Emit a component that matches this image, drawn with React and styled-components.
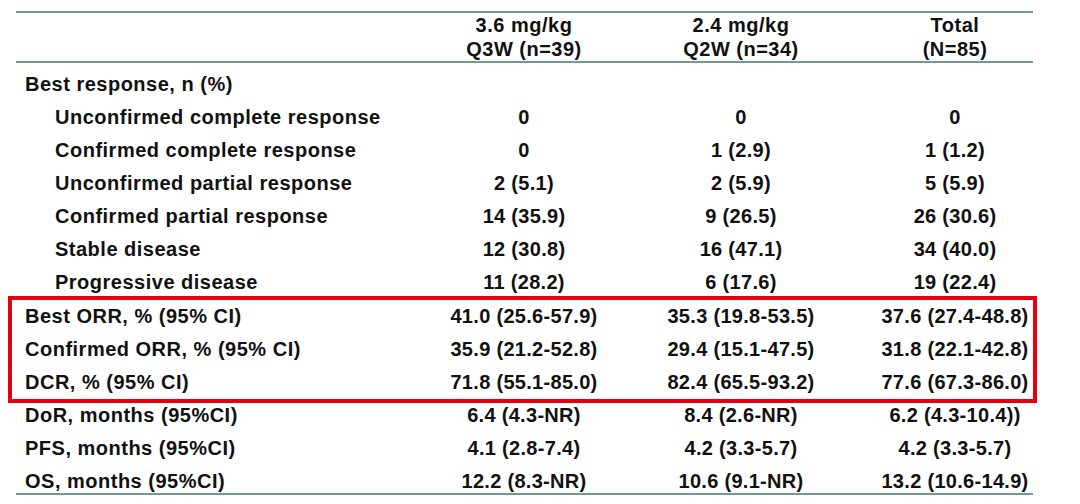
import React from "react";
import styled, { createGlobalStyle } from "styled-components";

const Global = createGlobalStyle`
  html, body { margin: 0; padding: 0; background: #ffffff; }
  body { font-family: "Liberation Sans", Arial, sans-serif; color: #111111; }
`;

const Page = styled.div`
  width: 1080px;
  height: 504px;
  overflow: hidden;
  padding-top: 11px;
  box-sizing: border-box;
`;

const Table = styled.div`
  margin-left: 16px;
  width: 1017px;
  border-top: 2px solid #6f9a97;
  border-bottom: 2px solid #6f9a97;
`;

const cols = "400px 216px 218px 183px";

const HeadRow = styled.div`
  display: grid;
  grid-template-columns: ${cols};
  padding-top: 1px;
  border-bottom: 2px solid #6f9a97;
`;

const HeadCell = styled.div`
  font-size: 20px;
  font-weight: 700;
  letter-spacing: 0.5px;
  line-height: 23.5px;
  text-align: center;
  display: flex;
  flex-direction: column;
  align-items: center;
  &:nth-child(4) { padding-left: 27px; }
`;

const Body = styled.div`
  padding-top: 5px;
`;

const Row = styled.div`
  display: grid;
  grid-template-columns: ${cols};
  height: ${(p) => (p.$last ? 28 : 33)}px;
  align-items: start;
`;

const Label = styled.div`
  font-size: 20px;
  font-weight: 700;
  letter-spacing: 0.5px;
  line-height: 33px;
  white-space: nowrap;
  padding-left: ${(p) => (p.$indent ? 39 : 9)}px;
`;

const Value = styled.div`
  font-size: 20px;
  font-weight: 700;
  letter-spacing: 0.3px;
  line-height: 33px;
  white-space: nowrap;
  display: flex;
  justify-content: center;
  &:nth-child(4) { padding-left: 27px; }
`;

const Highlight = styled.div`
  margin: -3px -4px -4px -8px;
  padding-left: 4px;
  border: 4px solid #e5000d;
`;

const head = [
  ["3.6 mg/kg", "Q3W (n=39)"],
  ["2.4 mg/kg", "Q2W (n=34)"],
  ["Total", "(N=85)"],
];

const responses = [
  ["Unconfirmed complete response", "0", "0", "0"],
  ["Confirmed complete response", "0", "1 (2.9)", "1 (1.2)"],
  ["Unconfirmed partial response", "2 (5.1)", "2 (5.9)", "5 (5.9)"],
  ["Confirmed partial response", "14 (35.9)", "9 (26.5)", "26 (30.6)"],
  ["Stable disease", "12 (30.8)", "16 (47.1)", "34 (40.0)"],
  ["Progressive disease", "11 (28.2)", "6 (17.6)", "19 (22.4)"],
];

const rates = [
  ["Best ORR, % (95% CI)", "41.0 (25.6-57.9)", "35.3 (19.8-53.5)", "37.6 (27.4-48.8)"],
  ["Confirmed ORR, % (95% CI)", "35.9 (21.2-52.8)", "29.4 (15.1-47.5)", "31.8 (22.1-42.8)"],
  ["DCR, % (95% CI)", "71.8 (55.1-85.0)", "82.4 (65.5-93.2)", "77.6 (67.3-86.0)"],
];

const times = [
  ["DoR, months (95%CI)", "6.4 (4.3-NR)", "8.4 (2.6-NR)", "6.2 (4.3-10.4))"],
  ["PFS, months (95%CI)", "4.1 (2.8-7.4)", "4.2 (3.3-5.7)", "4.2 (3.3-5.7)"],
  ["OS, months (95%CI)", "12.2 (8.3-NR)", "10.6 (9.1-NR)", "13.2 (10.6-14.9)"],
];

function DataRow({ cells, indent, last }) {
  const [label, ...vals] = cells;
  return (
    <Row $last={last}>
      <Label $indent={indent}>{label}</Label>
      {vals.map((v, i) => (
        <Value key={i}>{v}</Value>
      ))}
    </Row>
  );
}

export default function App() {
  return (
    <>
      <Global />
      <Page>
        <Table>
          <HeadRow>
            <HeadCell />
            {head.map((h, i) => (
              <HeadCell key={i}>
                <span>{h[0]}</span>
                <span>{h[1]}</span>
              </HeadCell>
            ))}
          </HeadRow>
          <Body>
            <Row>
              <Label>Best response, n (%)</Label>
            </Row>
            {responses.map((r) => (
              <DataRow key={r[0]} cells={r} indent />
            ))}
            <Highlight>
              {rates.map((r) => (
                <DataRow key={r[0]} cells={r} />
              ))}
            </Highlight>
            {times.map((r, i) => (
              <DataRow key={r[0]} cells={r} last={i === times.length - 1} />
            ))}
          </Body>
        </Table>
      </Page>
    </>
  );
}
